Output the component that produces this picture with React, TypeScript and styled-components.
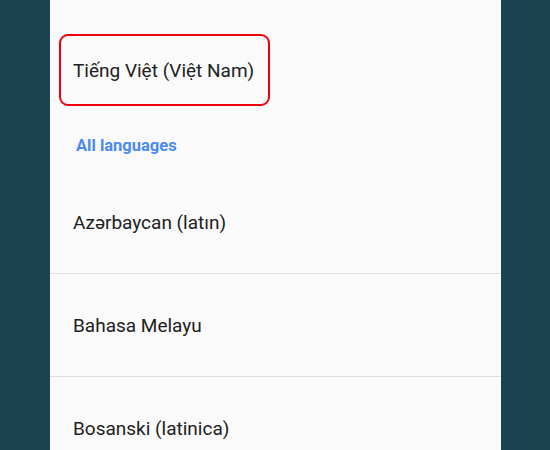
import React from "react";
import styled, { createGlobalStyle } from "styled-components";

const GlobalStyle = createGlobalStyle`
  html, body {
    margin: 0;
    padding: 0;
    height: 100%;
    overflow: hidden;
    background: #1b4450;
  }
  #root {
    height: 100%;
  }
`;

const Page = styled.div`
  display: flex;
  height: 100%;
  padding-left: 50px;
`;

const Panel = styled.div`
  width: 451px;
  height: 100%;
  overflow: hidden;
  background: #fafafa;
  font-family: Roboto, "Noto Sans", sans-serif;
  display: flex;
  flex-direction: column;
`;

const SectionHeader = styled.div<{ $top: number }>`
  flex-shrink: 0;
  margin-top: ${(p) => p.$top}px;
  padding-left: 26px;
  font-size: 16.5px;
  line-height: 20px;
  font-weight: 700;
  color: #4a8af4;
`;

const SelectedItem = styled.div`
  flex-shrink: 0;
  box-sizing: border-box;
  align-self: flex-start;
  display: flex;
  align-items: center;
  height: 72px;
  margin: 32px 0 0 9px;
  padding: 0 14px 0 12px;
  border: 2px solid #f0000d;
  border-radius: 9px;
  font-size: 19px;
  color: #212121;
`;

const List = styled.div`
  flex-shrink: 0;
  margin-top: 15px;
  display: flex;
  flex-direction: column;
`;

const Row = styled.div`
  flex-shrink: 0;
  height: 102px;
  display: flex;
  align-items: center;
  padding-left: 23px;
  border-bottom: 1px solid #e0e0e0;
  font-size: 19px;
  color: #212121;
`;

const languages = ["Azərbaycan (latın)", "Bahasa Melayu", "Bosanski (latinica)"];

export default function App() {
  return (
    <>
      <GlobalStyle />
      <Page>
        <Panel>
          <SectionHeader $top={-18}>Suggested</SectionHeader>
          <SelectedItem>Tiếng Việt (Việt Nam)</SelectedItem>
          <SectionHeader $top={30}>All languages</SectionHeader>
          <List>
            {languages.map((name) => (
              <Row key={name}>{name}</Row>
            ))}
          </List>
        </Panel>
      </Page>
    </>
  );
}
